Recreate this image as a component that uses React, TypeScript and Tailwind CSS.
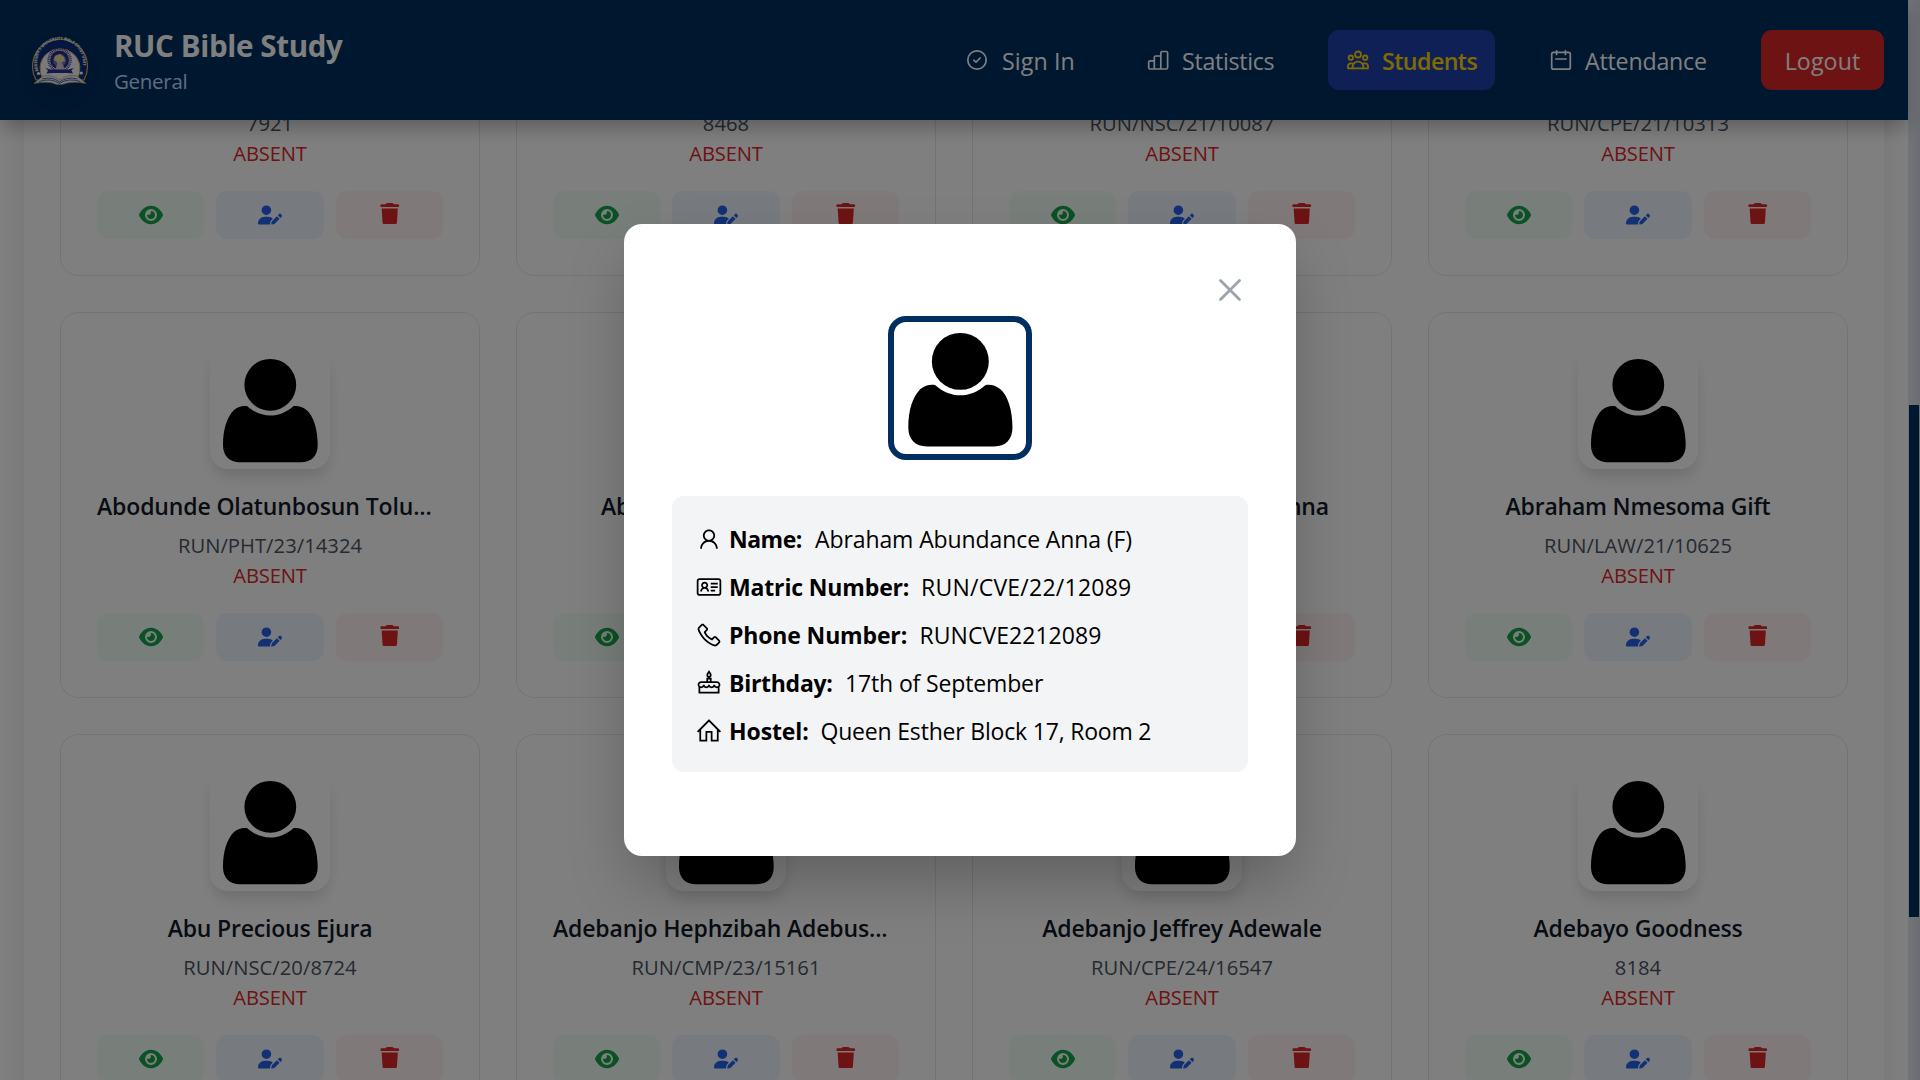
import React from "react";
import { FaEye, FaTrash, FaUserPen } from "react-icons/fa6";
import {
  LiaBirthdayCakeSolid,
  LiaHomeSolid,
  LiaIdCard,
  LiaPhoneSolid,
  LiaUser,
} from "react-icons/lia";

type Student = { name: string; matric: string };

const students: Student[] = [
  { name: "", matric: "7921" },
  { name: "", matric: "8468" },
  { name: "", matric: "RUN/NSC/21/10087" },
  { name: "", matric: "RUN/CPE/21/10313" },
  { name: "Abodunde Olatunbosun Tolu...", matric: "RUN/PHT/23/14324" },
  { name: "Abraham Abigail Grace", matric: "" },
  { name: "Abraham Abundance Anna", matric: "" },
  { name: "Abraham Nmesoma Gift", matric: "RUN/LAW/21/10625" },
  { name: "Abu Precious Ejura", matric: "RUN/NSC/20/8724" },
  { name: "Adebanjo Hephzibah Adebus...", matric: "RUN/CMP/23/15161" },
  { name: "Adebanjo Jeffrey Adewale", matric: "RUN/CPE/24/16547" },
  { name: "Adebayo Goodness", matric: "8184" },
];

function Person() {
  return (
    <svg viewBox="0 0 120 120" className="size-full">
      <circle cx="60.3" cy="35.800" r="25.900" />
      <path d="M37.3 57.2C33 56.4 28 57.5 24 61C17 68 13 80 13 96C13 107 19.5 113.2 30 113.2H91C101.500 113.200 107.700 107 107.700 96C107.700 80 103.500 67 96.500 61C92.500 57.500 87.500 56.400 83.300 57.200C76.500 63.200 68.500 66.600 60.300 66.600S44 63.200 37.300 57.200Z" />
    </svg>
  );
}

function Logo() {
  return (
    <svg viewBox="31 36 58 50" className="h-[50px] w-[58px]">
      <defs>
        <path id="ring" d="M38.500 71A23 23 0 1 1 81.500 71" />
      </defs>
      <path d="M36 80A27.500 27.500 0 1 1 84 80Z" fill="#0b2f80" stroke="#d8b23a" strokeWidth="1.200" />
      <path d="M43.500 80A20 20 0 1 1 76.500 80Z" fill="#f4f2fa" stroke="#d8b23a" strokeWidth="1" />
      <text fill="#fff" fontSize="4" fontWeight="700" fontFamily="Open Sans" textLength="83">
        <textPath href="#ring">REDEEMER'S UNIVERSITY BIBLE STUDY UNIT</textPath>
      </text>
      <circle cx="38.500" cy="73.500" r="1.600" fill="#fff" />
      <circle cx="81.300" cy="73" r="1.600" fill="#fff" />
      <circle cx="59.600" cy="60" r="9.500" fill="#2b2f86" />
      <circle cx="59.600" cy="60" r="11" fill="none" stroke="#4a4a9c" strokeWidth="2.500" strokeDasharray="1 .8" />
      <circle cx="59.600" cy="60.500" r="6.500" fill="#6d78b8" />
      <path d="M55 56l5-2 4 3 1 4-3 1-1 4h-3l-1-4-3-2z" fill="#e9dd9a" />
      <path d="M57 65l3-5 3 5 2 5H55z" fill="#d9c2cc" />
      <path d="M45.500 68l5 1.500h18l5-1.500-2 2.500 1.500 3-6-.5h-14l-6.500.5 1.500-3z" fill="#2f2f92" />
      <path d="M34 83.500L43 76q9-2 16.600 4Q67 74 77 76l9 7.500q-14-3-24 1h-5q-9-4-23-1z" fill="#f4f2fa" stroke="#b9a04a" strokeWidth=".7" />
      <path d="M39 81.500q12-4 20.500 2 8.500-6 21-2M42 79q10-3 17.500 3 8-6 18-3" fill="none" stroke="#1f3f8f" strokeWidth=".8" />
    </svg>
  );
}

const line = {
  viewBox: "0 0 24 24",
  fill: "none",
  stroke: "currentColor",
  strokeWidth: 1.7,
  strokeLinecap: "round",
  strokeLinejoin: "round",
  className: "size-6 shrink-0",
} as const;

function CheckIcon() {
  return (
    <svg {...line}>
      <circle cx="11" cy="12" r="9.200" />
      <path d="M7.800 12.200l2.200 2 4.200-4.200" />
    </svg>
  );
}

function BarsIcon() {
  return (
    <svg {...line}>
      <path d="M8.300 21H4.200a1.500 1.500 0 0 1-1.500-1.500v-5.200a1.500 1.500 0 0 1 1.500-1.500h4.100M8.300 21V9.500a1.500 1.500 0 0 1 1.500-1.500h5M8.300 21h6.500M14.800 21V5a1.500 1.500 0 0 1 1.500-1.500h3.800A1.500 1.500 0 0 1 21.600 5v14.500a1.500 1.500 0 0 1-1.500 1.500z" />
    </svg>
  );
}

function TeamIcon() {
  return (
    <svg {...line} strokeWidth={1.8}>
      <circle cx="12" cy="6.500" r="3" />
      <circle cx="4.800" cy="9.700" r="2.200" />
      <circle cx="19.200" cy="9.700" r="2.200" />
      <path d="M6.600 20.300v-1.300a5.400 5.400 0 0 1 10.800 0v1.300" />
      <path d="M6.200 15.400H4.900a2.900 2.900 0 0 0-2.900 2.900v2h20v-2a2.900 2.900 0 0 0-2.900-2.900h-1.300" />
    </svg>
  );
}

function CalendarIcon() {
  return (
    <svg {...line}>
      <rect x="2.700" y="4.300" width="18.600" height="16.900" rx="1.800" />
      <path d="M7.600 2.800v3.700M16.400 2.800v3.700M6.900 11h10.200" />
    </svg>
  );
}

function Header() {
  return (
    <header className="relative z-10 flex h-[120px] w-[1908px] items-center justify-between bg-[#002e61] pl-[31px] pr-6 text-white shadow-[0_12px_18px_-4px_rgba(0,0,0,0.16),0_5px_20px_rgba(0,0,0,0.14)]">
      <div className="flex items-center">
        <div className="flex h-[58px] w-[58px] items-center justify-center rounded-full pt-[2px] shadow-[0_12px_18px_-4px_rgba(0,0,0,0.12)]">
          <Logo />
        </div>
        <div className="ml-[25px] flex flex-col pt-1">
          <span className="text-[29.500px] font-bold leading-[37px] tracking-[-0.35px]">RUC Bible Study</span>
          <span className="text-[20.500px] leading-[34px] tracking-[-0.3px] text-[#bfdbfe]">General</span>
        </div>
      </div>
      <nav className="flex items-center gap-9 text-[23.200px]">
        <div className="flex h-[60px] w-[144px] items-center gap-3 pl-[18px]">
          <CheckIcon />
          <span className="whitespace-nowrap pt-0.5 tracking-[0.1px]">Sign In</span>
        </div>
        <div className="flex h-[60px] w-[164px] items-center gap-3 pl-[18px]">
          <BarsIcon />
          <span className="pt-0.5 tracking-[-0.3px]">Statistics</span>
        </div>
        <div className="flex h-[60px] w-[167px] items-center gap-3 rounded-[11px] bg-[#1e40af] pl-[18px] font-semibold text-[#ffd700]">
          <TeamIcon />
          <span className="pt-0.5 tracking-[-0.55px]">Students</span>
        </div>
        <div className="flex h-[60px] w-[194px] items-center gap-3 pl-[18px]">
          <CalendarIcon />
          <span className="pt-0.5 tracking-[-0.2px]">Attendance</span>
        </div>
        <div className="flex h-[60px] w-[123px] items-center justify-center rounded-[11px] bg-[#dc2626]">
          <span className="pt-0.5 tracking-[0.1px]">Logout</span>
        </div>
      </nav>
    </header>
  );
}

function StudentCard({ name, matric }: Student) {
  const truncated = name.endsWith("...");
  return (
    <div className="flex h-[386px] flex-col items-center rounded-[18px] border border-[#e5e7eb] bg-white p-9">
      <div className="size-[120px] shrink-0 rounded-[18px] bg-white shadow-[0_12px_18px_-4px_rgba(0,0,0,0.1),0_5px_12px_rgba(0,0,0,0.05)]">
        <Person />
      </div>
      <h3
        className={
          "mt-5 h-[34px] w-full whitespace-nowrap text-[23px] font-semibold leading-[34px] text-[#111827] " +
          (truncated ? "text-left tracking-[-0.14px]" : "text-center tracking-[-0.2px]")
        }
      >
        {name}
      </h3>
      <p className="mt-[7px] h-[30px] text-[20.200px] leading-[30px] tracking-[0.04px] text-[#4b5563]">{matric}</p>
      <p className="h-[30px] text-[20.200px] leading-[30px] tracking-[-0.18px] text-[#dc2626]">ABSENT</p>
      <div className="mt-[23px] grid w-full grid-cols-3 gap-3">
        <button className="flex h-12 items-center justify-center rounded-[11px] bg-[#f0fdf4] text-[#16a34a]">
          <FaEye className="size-6" />
        </button>
        <button className="flex h-12 items-center justify-center rounded-[11px] bg-[#eff6ff] text-[#2563eb]">
          <FaUserPen className="size-6" />
        </button>
        <button className="flex h-12 items-center justify-center rounded-[11px] bg-[#fef2f2] pb-[3px] text-[#dc2626]">
          <FaTrash className="size-[21.500px]" />
        </button>
      </div>
    </div>
  );
}

const details = [
  { Icon: LiaUser, label: "Name:", value: "Abraham Abundance Anna (F)", l: "w-[86px] tracking-[-0.5px]", v: "tracking-[-0.1px]" },
  { Icon: LiaIdCard, label: "Matric Number:", value: "RUN/CVE/22/12089", l: "w-[192px] tracking-[-0.15px]", v: "tracking-[0.24px]" },
  { Icon: LiaPhoneSolid, label: "Phone Number:", value: "RUNCVE2212089", l: "w-[190.500px] tracking-[-0.15px]", v: "tracking-[0.04px]" },
  { Icon: LiaBirthdayCakeSolid, label: "Birthday:", value: "17th of September", l: "w-[116px] tracking-[-0.28px]", v: "tracking-[-0.14px]" },
  { Icon: LiaHomeSolid, label: "Hostel:", value: "Queen Esther Block 17, Room 2", l: "w-[91.500px] tracking-[-0.1px]", v: "tracking-[-0.19px]" },
];

function StudentModal() {
  return (
    <div className="flex h-[632px] w-[672px] flex-col items-center rounded-[18px] bg-white px-12 pt-[54px] shadow-[0_30px_60px_-6px_rgba(0,0,0,0.25)]">
      <button className="mr-[6px] flex size-6 items-center justify-center self-end text-[#9ca3af]">
        <svg viewBox="0 0 24 24" className="size-6" fill="none" stroke="currentColor" strokeWidth="2.800" strokeLinecap="round">
          <path d="M2.500 2.500l19 19M21.500 2.500L2.500 21.500" />
        </svg>
      </button>
      <div className="mt-[14px] size-36 shrink-0 rounded-[18px] border-[6px] border-[#002e61] bg-white">
        <Person />
      </div>
      <div className="mt-9 flex h-[276px] w-[576px] flex-col gap-3 rounded-[12px] bg-[#f3f4f6] px-6 pt-[25px] text-[23px] leading-9 text-black">
        {details.map(({ Icon, label, value, l, v }) => (
          <div key={label} className="flex h-9 items-center whitespace-nowrap">
            <Icon className="-ml-px mr-[6px] size-7 shrink-0" />
            <strong className={l}>{label}</strong>
            <span className={v}>{value}</span>
          </div>
        ))}
      </div>
    </div>
  );
}

export default function App() {
  return (
    <div className="relative h-[1080px] w-[1920px] overflow-hidden bg-white font-['Open_Sans',sans-serif]">
      <div className="flex h-full">
        <div className="flex w-[1908px] flex-col">
          <Header />
          <main className="h-[960px] overflow-hidden px-6">
            <div className="-mt-[266px] bg-white p-9 shadow-[0_0_28px_rgba(0,0,0,0.08)]">
              <div className="grid grid-cols-4 gap-9">
                {students.map((s) => (
                  <StudentCard key={s.matric + s.name} {...s} />
                ))}
              </div>
            </div>
          </main>
        </div>
        <div className="w-3 bg-linear-to-r from-[#e4e9f0] to-[#d6dbe2] px-px pt-[405px]">
          <div className="h-[512px] bg-[#002e61]" />
        </div>
      </div>
      <div className="absolute inset-0 z-20 flex items-center justify-center bg-black/50">
        <StudentModal />
      </div>
    </div>
  );
}
